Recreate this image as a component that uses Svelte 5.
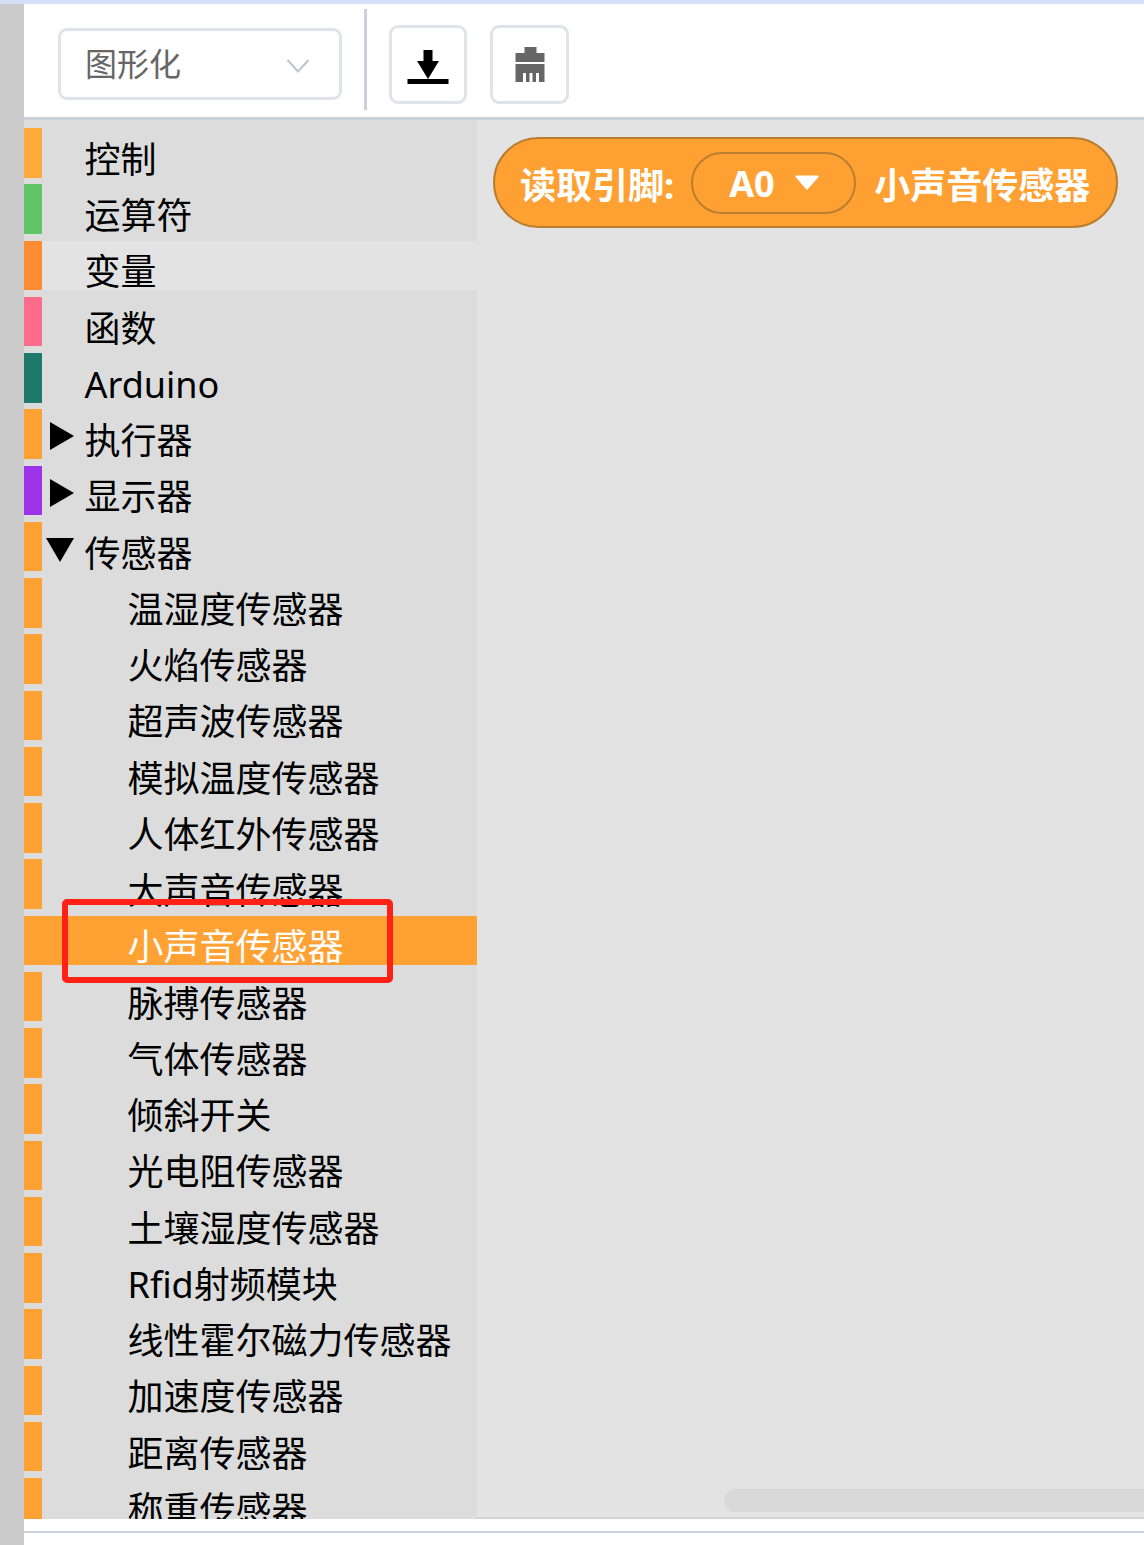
<script>
  const CJK = '#ffa233';
  const rows = [
    { label: '控制', color: '#ffab3b' },
    { label: '运算符', color: '#61c467' },
    { label: '变量', color: '#ff8c33', hover: true },
    { label: '函数', color: '#ff6b8b' },
    { label: 'Arduino', color: '#1f7a6b' },
    { label: '执行器', color: CJK, arrow: 'right' },
    { label: '显示器', color: '#9c33e8', arrow: 'right' },
    { label: '传感器', color: CJK, arrow: 'down' },
    ...['温湿度传感器','火焰传感器','超声波传感器','模拟温度传感器','人体红外传感器','大声音传感器','小声音传感器','脉搏传感器','气体传感器','倾斜开关','光电阻传感器','土壤湿度传感器','Rfid射频模块','线性霍尔磁力传感器','加速度传感器','距离传感器','称重传感器']
      .map((label) => ({ label, color: CJK, sub: true, selected: label === '小声音传感器' }))
  ];
</script>

<div class="page">
  <div class="topline"></div>
  <div class="frame">
    <div class="rail"></div>
    <div class="content">
      <header class="toolbar">
        <div class="select">
          <span class="select-text">图形化</span>
          <svg class="chev" width="24" height="16" viewBox="0 0 24 16"><path d="M1.500 2 L12 13.500 L22.500 2" fill="none" stroke="#c0c4cc" stroke-width="2"/></svg>
        </div>
        <div class="divider"></div>
        <button class="tool first" aria-label="下载">
          <svg width="42" height="36" viewBox="0 0 42 36"><path d="M16.500 0 H25.500 V11 H32 L21 29 L10 11 H16.500 Z M0.500 29 H41.500 V34 H0.500 Z" fill="#000"/></svg>
        </button>
        <button class="tool brush" aria-label="清除">
          <svg width="30" height="36" viewBox="0 0 30 36"><path d="M9.500 0 H21.500 V6 H29.500 V15 H0.500 V6 H9.500 Z M0.500 17 H29.500 V35 H24 V26 H21 V35 H17.500 V26 H14.500 V35 H11 V26 H8 V35 H0.500 Z" fill="#666"/></svg>
        </button>
      </header>
      <div class="work">
        <nav class="tree">
          {#each rows as row}
            <div class="row" class:hover={row.hover} class:selected={row.selected} class:sub={row.sub}>
              <i class="bar" style="background:{row.color}"></i>
              {#if row.arrow === 'right'}
                <svg class="arrow" width="26" height="30" viewBox="0 0 26 30"><path d="M1 1 L25 15 L1 29 Z" fill="#000"/></svg>
              {:else if row.arrow === 'down'}
                <svg class="arrow down" width="30" height="26" viewBox="0 0 30 26"><path d="M1 1 H29 L15 25 Z" fill="#000"/></svg>
              {/if}
              <span class="label">{row.label}</span>
            </div>
          {/each}
        </nav>
        <main class="canvas">
          <div class="block">
            <span class="block-text">读取引脚:</span>
            <div class="pin">
              <span class="block-text">A0</span>
              <svg width="26" height="15" viewBox="0 0 26 15"><path d="M2.500 1.500 H23.500 L13 13.500 Z" fill="#fff" stroke="#fff" stroke-width="2" stroke-linejoin="round"/></svg>
            </div>
            <span class="block-text">小声音传感器</span>
          </div>
          <div class="scroll"></div>
        </main>
      </div>
      <div class="foot"></div>
    </div>
  </div>
  <div class="mark"></div>
</div>

<style>
  :global(body) { margin: 0; background: #fff; }
  .page {
    position: relative;
    width: 1144px;
    height: 1545px;
    overflow: hidden;
    font-family: "Noto Sans", "Noto Sans CJK SC", sans-serif;
    display: flex;
    flex-direction: column;
  }
  .topline { height: 4px; background: #d3e0f6; flex: none; }
  .frame { flex: 1; display: flex; min-height: 0; }
  .rail { width: 24px; background: #cbcbcb; flex: none; }
  .content { flex: 1; display: flex; flex-direction: column; min-width: 0; }
  .toolbar {
    height: 113px;
    flex: none;
    background: #fff;
    border-bottom: 3px solid #c9d2db;
    display: flex;
    align-items: center;
    padding-left: 34px;
  }
  .select {
    width: 284px;
    height: 72px;
    box-sizing: border-box;
    border: 3px solid #dfe3ea;
    border-radius: 9px;
    display: flex;
    align-items: center;
    justify-content: space-between;
    padding: 0 29px 0 24px;
    margin-top: 6px;
    color: #666;
    font-size: 32px;
  }
  .select-text { position: relative; top: -2px; }
  .chev { margin-top: 4px; }
  .divider { width: 3px; height: 101px; background: #c9d2db; margin: -2px 22px 0; }
  .tool {
    width: 78px;
    height: 79px;
    box-sizing: border-box;
    background: #fff;
    border: 3px solid #dfe3ea;
    border-radius: 9px;
    padding: 0;
    display: flex;
    align-items: center;
    justify-content: center;
    margin-top: 7px;
  }
  .tool svg { margin-top: 8px; }
  .tool.first { margin-right: 23px; }
  .tool.brush { width: 79px; }
  .tool.brush svg { margin-top: 2px; }
  .work { height: 1399px; flex: none; display: flex; min-height: 0; }
  .tree {
    width: 453px;
    flex: none;
    background: #dcdcdc;
    padding-top: 8px;
    box-sizing: border-box;
    overflow: hidden;
  }
  .row {
    height: 49.500px;
    margin-bottom: 6.750px;
    display: flex;
    align-items: center;
    position: relative;
    font-size: 36px;
    color: #000;
    white-space: nowrap;
  }
  .row.hover { background: #e3e3e3; }
  .row.selected { background: #ffa233; color: #fff; }
  .bar { width: 18px; align-self: stretch; flex: none; }
  .label { margin-left: 42.500px; line-height: 1; position: relative; top: 7px; }
  .row.sub .label { margin-left: 85.500px; }
  .arrow { position: absolute; left: 25px; top: 12px; }
  .arrow.down { left: 21px; top: 15px; }
  .canvas { flex: 1; position: relative; background: #e3e3e3; border-bottom: 2px solid #d2d2d2; padding: 17px 0 0 17px; box-sizing: border-box; }
  .block {
    width: 625px;
    height: 91px;
    margin-left: -1px;
    box-sizing: border-box;
    background: #ffa033;
    border: 2.500px solid #bb7e30;
    border-radius: 45.500px;
    display: flex;
    align-items: center;
    padding-left: 25px;
    color: #fff;
    font-size: 36px;
    font-weight: 700;
    white-space: nowrap;
  }
  .block-text { position: relative; top: 1px; }
  .pin {
    width: 165px;
    height: 62px;
    box-sizing: border-box;
    border: 2.500px solid #bb7e30;
    border-radius: 31px;
    display: flex;
    align-items: center;
    padding-left: 36px;
    margin: 0 18px 0 17px;
    gap: 19px;
  }
  .scroll {
    position: absolute;
    left: 247px;
    right: 0;
    bottom: 5px;
    height: 23px;
    background: #d9d9d9;
    border-radius: 12px 0 0 12px;
  }
  .foot { flex: 1; background: #fff; border-bottom: 2px solid #c9d2db; margin-bottom: 12px; }
  .mark {
    position: absolute;
    left: 62px;
    top: 899px;
    width: 331px;
    height: 84px;
    box-sizing: border-box;
    border: 6px solid #ff2016;
    border-radius: 5px;
  }
</style>
